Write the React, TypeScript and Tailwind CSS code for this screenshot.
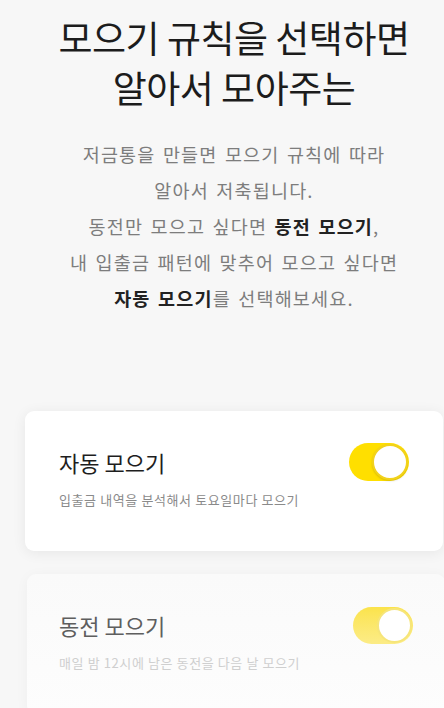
function Toggle({ faded }: { faded?: boolean }) {
  return (
    <div
      className={
        faded
          ? "relative h-[37px] w-[60px] rounded-full bg-gradient-to-b from-[#fbe34a] to-[#fcec86]"
          : "relative h-[38px] w-[60px] rounded-full bg-[#ffdf00]"
      }
    >
      <div
        className={
          faded
            ? "absolute right-[1px] top-[1px] h-[35px] w-[35px] rounded-full border-[2px] border-[#f6e57a] bg-white"
            : "absolute right-[1px] top-[1px] h-[36px] w-[36px] rounded-full border-[2px] border-[#f2d21c] bg-white shadow-[0_1px_2px_rgba(0,0,0,0.15)]"
        }
      />
    </div>
  );
}

export default function App() {
  return (
    <div
      className="h-[708px] w-[444px] overflow-hidden bg-[#f7f7f7]"
      style={{ fontFamily: '"Noto Sans CJK KR", "Noto Sans", sans-serif' }}
    >
      <div className="w-[468px]">
        <h1 className="pt-[12px] text-center text-[37px] font-normal leading-[50px] tracking-[-0.5px] text-[#1c1c1c]">
          모으기 규칙을 선택하면
          <br />
          알아서 모아주는
        </h1>

        <p className="mt-[24px] text-center text-[18.5px] leading-[36px] tracking-[1.2px] [word-spacing:2px] text-[#7d7d7d]">
          저금통을 만들면 모으기 규칙에 따라
          <br />
          알아서 저축됩니다.
          <br />
          동전만 모으고 싶다면 <span className="font-bold text-[#222]">동전 모으기</span>,
          <br />
          내 입출금 패턴에 맞추어 모으고 싶다면
          <br />
          <span className="font-bold text-[#222]">자동 모으기</span>를 선택해보세요.
        </p>

        <div className="mx-[25px] mt-[95px] flex flex-col gap-[23px]">
          <div className="h-[140px] rounded-[9px] bg-white px-[34px] pt-[32px] shadow-[0_2px_14px_rgba(0,0,0,0.07)]">
            <div className="flex items-center justify-between">
              <span className="text-[22px] leading-[38px] text-[#1e1e1e]">자동 모으기</span>
              <Toggle />
            </div>
            <p className="mt-[9px] text-[13px] leading-[20px] tracking-[0.6px] text-[#8a8a8a]">
              입출금 내역을 분석해서 토요일마다 모으기
            </p>
          </div>

          <div className="h-[140px] translate-x-[2px] rounded-[9px] bg-gradient-to-b from-[#fafafa] to-[#fdfdfd] px-[32px] pt-[33px] shadow-[0_2px_14px_rgba(0,0,0,0.04)]">
            <div className="flex items-center justify-between">
              <span className="text-[22px] leading-[37px] text-[#5e5e5e]">동전 모으기</span>
              <Toggle faded />
            </div>
            <p className="mt-[9px] text-[13px] leading-[20px] tracking-[0.6px] text-[#cfcfcf]">
              매일 밤 12시에 남은 동전을 다음 날 모으기
            </p>
          </div>
        </div>
      </div>
    </div>
  );
}
